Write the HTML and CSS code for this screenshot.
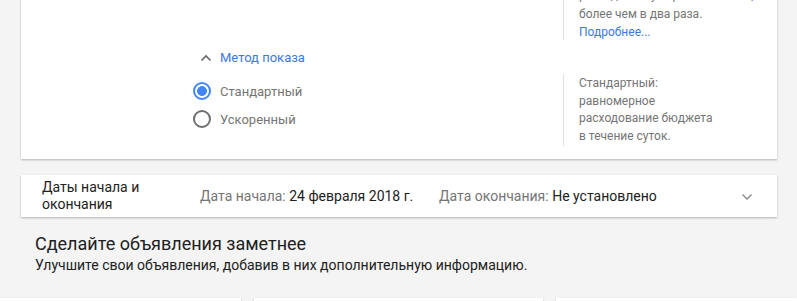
FILE: index.html
```html
<!DOCTYPE html>
<html lang="ru">
  <head>
    <meta charset="UTF-8" />
    <meta name="viewport" content="width=device-width, initial-scale=1.0" />
    <title>Настройки кампании</title>
    <link rel="stylesheet" href="styles.css">
  </head>
  <body>
    <div class="page">
      <section class="card delivery">
        <div class="delivery-main">
          <button class="method-toggle">
            <svg class="chevron" viewBox="0 0 12 8" width="12" height="8">
              <path d="M1.5 6.5 L6 2 L10.5 6.5" fill="none" stroke="#666" stroke-width="1.6" />
            </svg>
            <span>Метод показа</span>
          </button>
          <div class="radio-group">
            <label class="radio checked"><span class="dot"></span>Стандартный</label>
            <label class="radio"><span class="dot"></span>Ускоренный</label>
          </div>
        </div>
        <div class="delivery-help">
          <div class="help help-top">
            <p class="cut">расходы могут превышать его,</p>
            <p>более чем в два раза.</p>
            <a href="#">Подробнее...</a>
          </div>
          <div class="help help-bottom">
            <p>Стандартный:</p>
            <p>равномерное</p>
            <p>расходование бюджета</p>
            <p>в течение суток.</p>
          </div>
        </div>
      </section>

      <section class="card dates">
        <div class="dates-title">Даты начала и окончания</div>
        <div class="dates-value start"><span class="muted">Дата начала:</span> 24 февраля 2018 г.</div>
        <div class="dates-value end"><span class="muted">Дата окончания:</span> Не установлено</div>
        <svg class="expand" viewBox="0 0 12 8" width="12" height="8">
          <path d="M1.5 1.5 L6 6 L10.5 1.5" fill="none" stroke="#888" stroke-width="1.3" />
        </svg>
      </section>

      <div class="promo">
        <h2>Сделайте объявления заметнее</h2>
        <p>Улучшите свои объявления, добавив в них дополнительную информацию.</p>
      </div>
    </div>

    <div class="ext-cards">
      <div class="ext-card first"></div>
      <div class="ext-card second"></div>
      <div class="ext-card third"></div>
    </div>
  </body>
</html>
```

FILE: styles.css
```css
:root {
  --page-bg: #f4f4f4;
  --card-bg: #ffffff;
  --blue: #3b78e7;
  --radio-blue: #4285f4;
  --text-primary: #212121;
  --text-secondary: #757575;
  --divider: #e0e0e0;
}

* {
  box-sizing: border-box;
  margin: 0;
  padding: 0;
}

body {
  font-family: Roboto, "Noto Sans", sans-serif;
  background-color: var(--page-bg);
  color: var(--text-primary);
  overflow: hidden;
}

.page {
  padding: 0 20px 0 21px;
}

.card {
  background-color: var(--card-bg);
  box-shadow: 0 1px 2px rgba(0, 0, 0, 0.28);
}

/* delivery method card (scrolled, top is cut off) */
.delivery {
  display: flex;
  margin-top: -28px;
  height: 187px;
}

.delivery-main {
  flex: 1;
  padding: 78px 0 0 172px;
}

.method-toggle {
  display: flex;
  align-items: center;
  gap: 8px;
  border: none;
  background: none;
  font-family: inherit;
  font-size: 13px;
  color: var(--blue);
  cursor: pointer;
  margin-left: 7px;
}

.radio-group {
  display: flex;
  flex-direction: column;
  gap: 10px;
  margin-top: 17px;
}

.radio {
  display: flex;
  align-items: center;
  gap: 9px;
  font-size: 13px;
  color: var(--text-secondary);
  height: 18px;
}

.dot {
  width: 18px;
  height: 18px;
  border-radius: 50%;
  border: 2px solid #6e6e6e;
}

.radio.checked .dot {
  border-color: var(--radio-blue);
  background: radial-gradient(circle, var(--radio-blue) 0 4.6px, transparent 5.2px);
}

.delivery-help {
  width: 214px;
}

.help {
  border-left: 1px solid var(--divider);
  padding-left: 15px;
  font-size: 12px;
  line-height: 17.6px;
  color: var(--text-secondary);
}

.help-top {
  padding-top: 12px;
  height: 68px;
}

.help .cut {
  line-height: 22px;
}

.help-top a {
  color: var(--blue);
  text-decoration: none;
}

.help-bottom {
  margin-top: 34px;
  height: 72px;
  padding-top: 1px;
}

/* dates row */
.dates {
  display: flex;
  align-items: center;
  margin-top: 16px;
  height: 42px;
  padding: 0 24px 0 21px;
  font-size: 14px;
}

.dates-title {
  width: 158px;
  line-height: 17px;
}

.start {
  width: 239px;
}

.muted {
  color: var(--text-secondary);
}

.expand {
  margin-left: auto;
  margin-top: 2px;
}

/* promo block */
.promo {
  padding: 16px 14px 0;
}

.promo h2 {
  font-size: 18px;
  font-weight: 400;
  color: var(--text-primary);
  line-height: 22px;
}

.promo p {
  font-size: 14px;
  line-height: 20px;
  color: var(--text-primary);
}

.ext-cards {
  display: flex;
  gap: 13px;
  margin-top: 23px;
}

.ext-card {
  height: 40px;
  background-color: var(--card-bg);
  box-shadow: 0 1px 2px rgba(0, 0, 0, 0.25);
}

.first {
  width: 241px;
}

.second {
  width: 289px;
}

.third {
  flex: 1;
}
```
